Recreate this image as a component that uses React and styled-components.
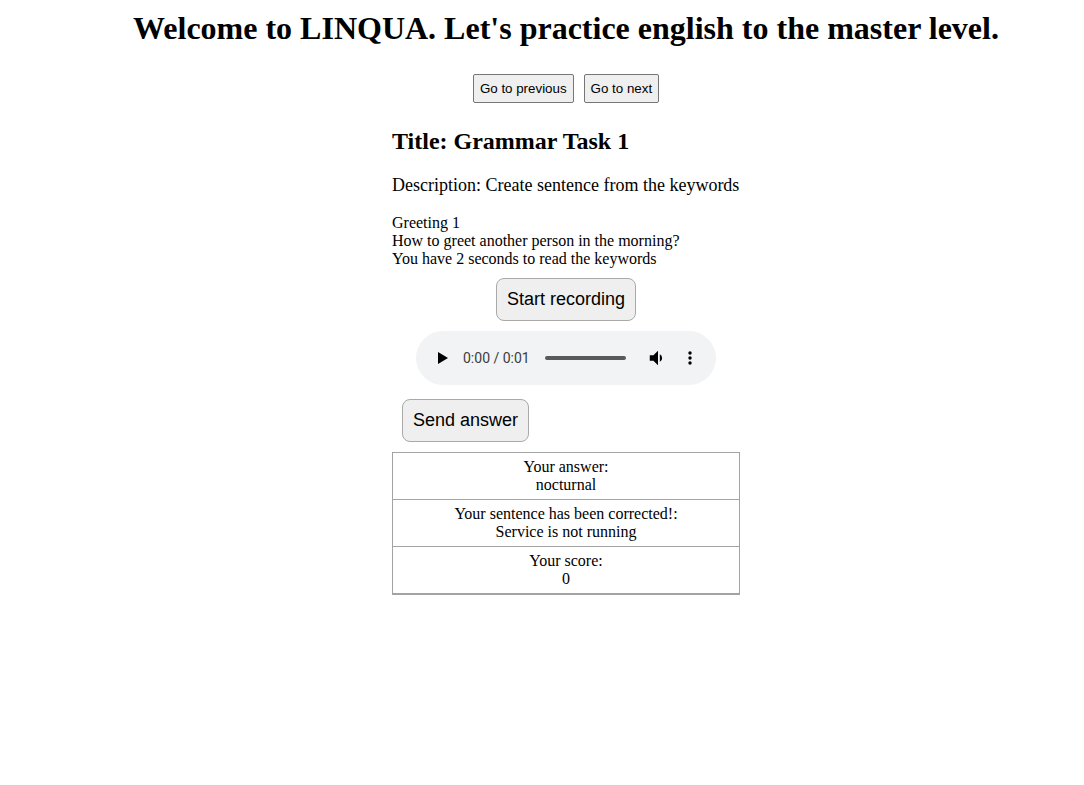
import React from 'react';
import styled, { createGlobalStyle } from 'styled-components';

const GlobalStyle = createGlobalStyle`
    body {
        margin: 0;
        background: #ffffff;
        color: #000000;
        font-family: 'Liberation Serif', 'Times New Roman', serif;
    }
`;

const Page = styled.div`
    display: flex;
    flex-direction: column;
    align-items: center;
    padding: 10px 0 0 48px;
`;

const Heading = styled.h1`
    margin: 0;
    font-size: 32px;
    line-height: 37px;
    font-weight: bold;
`;

const NavRow = styled.div`
    display: flex;
    gap: 10px;
    margin-top: 27px;
`;

const NavButton = styled.button`
    font-family: 'Liberation Sans', Arial, sans-serif;
    font-size: 13.33px;
    line-height: 17px;
    padding: 5px 6px;
    background: #efefef;
    border: 1px solid #767676;
    border-radius: 2px;
    color: #000;
`;

const Task = styled.div`
    width: 348px;
    display: flex;
    flex-direction: column;
    margin-top: 24px;
`;

const Title = styled.h2`
    margin: 0;
    font-size: 24px;
    line-height: 28px;
    font-weight: bold;
`;

const Description = styled.p`
    margin: 20px 0 0;
    font-size: 18px;
    line-height: 21px;
`;

const Prompt = styled.div`
    margin-top: 18px;
    font-size: 16px;
    line-height: 18px;
`;

const BigButton = styled.button`
    align-self: ${(p) => (p.$left ? 'flex-start' : 'center')};
    margin: ${(p) => p.$margin};
    font-family: 'Liberation Sans', Arial, sans-serif;
    font-size: 18px;
    line-height: 21px;
    padding: 10px 10px;
    background: #efefef;
    border: 1px solid #a9a9a9;
    border-radius: 8px;
    color: #000;
`;

const Player = styled.div`
    align-self: center;
    margin-top: 10px;
    width: 300px;
    height: 54px;
    box-sizing: border-box;
    border-radius: 27px;
    background: #f1f3f4;
    display: flex;
    align-items: center;
    padding: 0 24px 0 22px;
`;

const Time = styled.span`
    font-family: Roboto, 'Liberation Sans', sans-serif;
    font-size: 14px;
    color: #3c3c3c;
    margin-left: 15px;
`;

const Track = styled.div`
    width: 81px;
    height: 4px;
    border-radius: 2px;
    background: #595959;
    margin-left: 15px;
`;

const Spacer = styled.div`
    flex: 1;
`;

const IconBox = styled.span`
    display: flex;
    align-items: center;
    margin-left: ${(p) => p.$gap || 0}px;
`;

const Results = styled.table`
    margin-top: 10px;
    width: 348px;
    border-collapse: collapse;
    border: 1px solid #a3a3a3;
    border-bottom-width: 2px;
`;

const Cell = styled.td`
    border: 1px solid #a3a3a3;
    text-align: center;
    padding: 5px 4px;
    font-size: 16px;
    line-height: 18px;
`;

function AudioBar() {
    return (
        <Player>
            <IconBox>
                <svg width="10" height="12" viewBox="0 0 10 12">
                    <path d="M0 0 L10 6 L0 12 Z" fill="#000" />
                </svg>
            </IconBox>
            <Time>0:00 / 0:01</Time>
            <Track />
            <Spacer />
            <IconBox>
                <svg width="22" height="22" viewBox="0 0 24 24">
                    <path
                        d="M3 9v6h4l5 5V4L7 9H3zm13.5 3A4.5 4.5 0 0 0 14 7.97v8.05c1.48-.73 2.5-2.25 2.5-4.02z"
                        fill="#000"
                    />
                </svg>
            </IconBox>
            <IconBox $gap={19}>
                <svg width="4" height="14" viewBox="0 0 4 14">
                    <circle cx="2" cy="2" r="1.7" fill="#000" />
                    <circle cx="2" cy="7" r="1.7" fill="#000" />
                    <circle cx="2" cy="12" r="1.7" fill="#000" />
                </svg>
            </IconBox>
        </Player>
    );
}

export default function App() {
    const rows = [
        ['Your answer:', 'nocturnal'],
        ['Your sentence has been corrected!:', 'Service is not running'],
        ['Your score:', '0'],
    ];

    return (
        <>
            <GlobalStyle />
            <Page>
                <Heading>
                    Welcome to LINQUA. Let's practice english to the master
                    level.
                </Heading>
                <NavRow>
                    <NavButton>Go to previous</NavButton>
                    <NavButton>Go to next</NavButton>
                </NavRow>
                <Task>
                    <Title>Title: Grammar Task 1</Title>
                    <Description>
                        Description: Create sentence from the keywords
                    </Description>
                    <Prompt>
                        Greeting 1
                        <br />
                        How to greet another person in the morning?
                        <br />
                        You have 2 seconds to read the keywords
                    </Prompt>
                    <BigButton $margin="10px 0 0">Start recording</BigButton>
                    <AudioBar />
                    <BigButton $left $margin="14px 0 0 10px">
                        Send answer
                    </BigButton>
                    <Results>
                        <tbody>
                            {rows.map(([label, value]) => (
                                <tr key={label}>
                                    <Cell>
                                        {label}
                                        <br />
                                        {value}
                                    </Cell>
                                </tr>
                            ))}
                        </tbody>
                    </Results>
                </Task>
            </Page>
        </>
    );
}
